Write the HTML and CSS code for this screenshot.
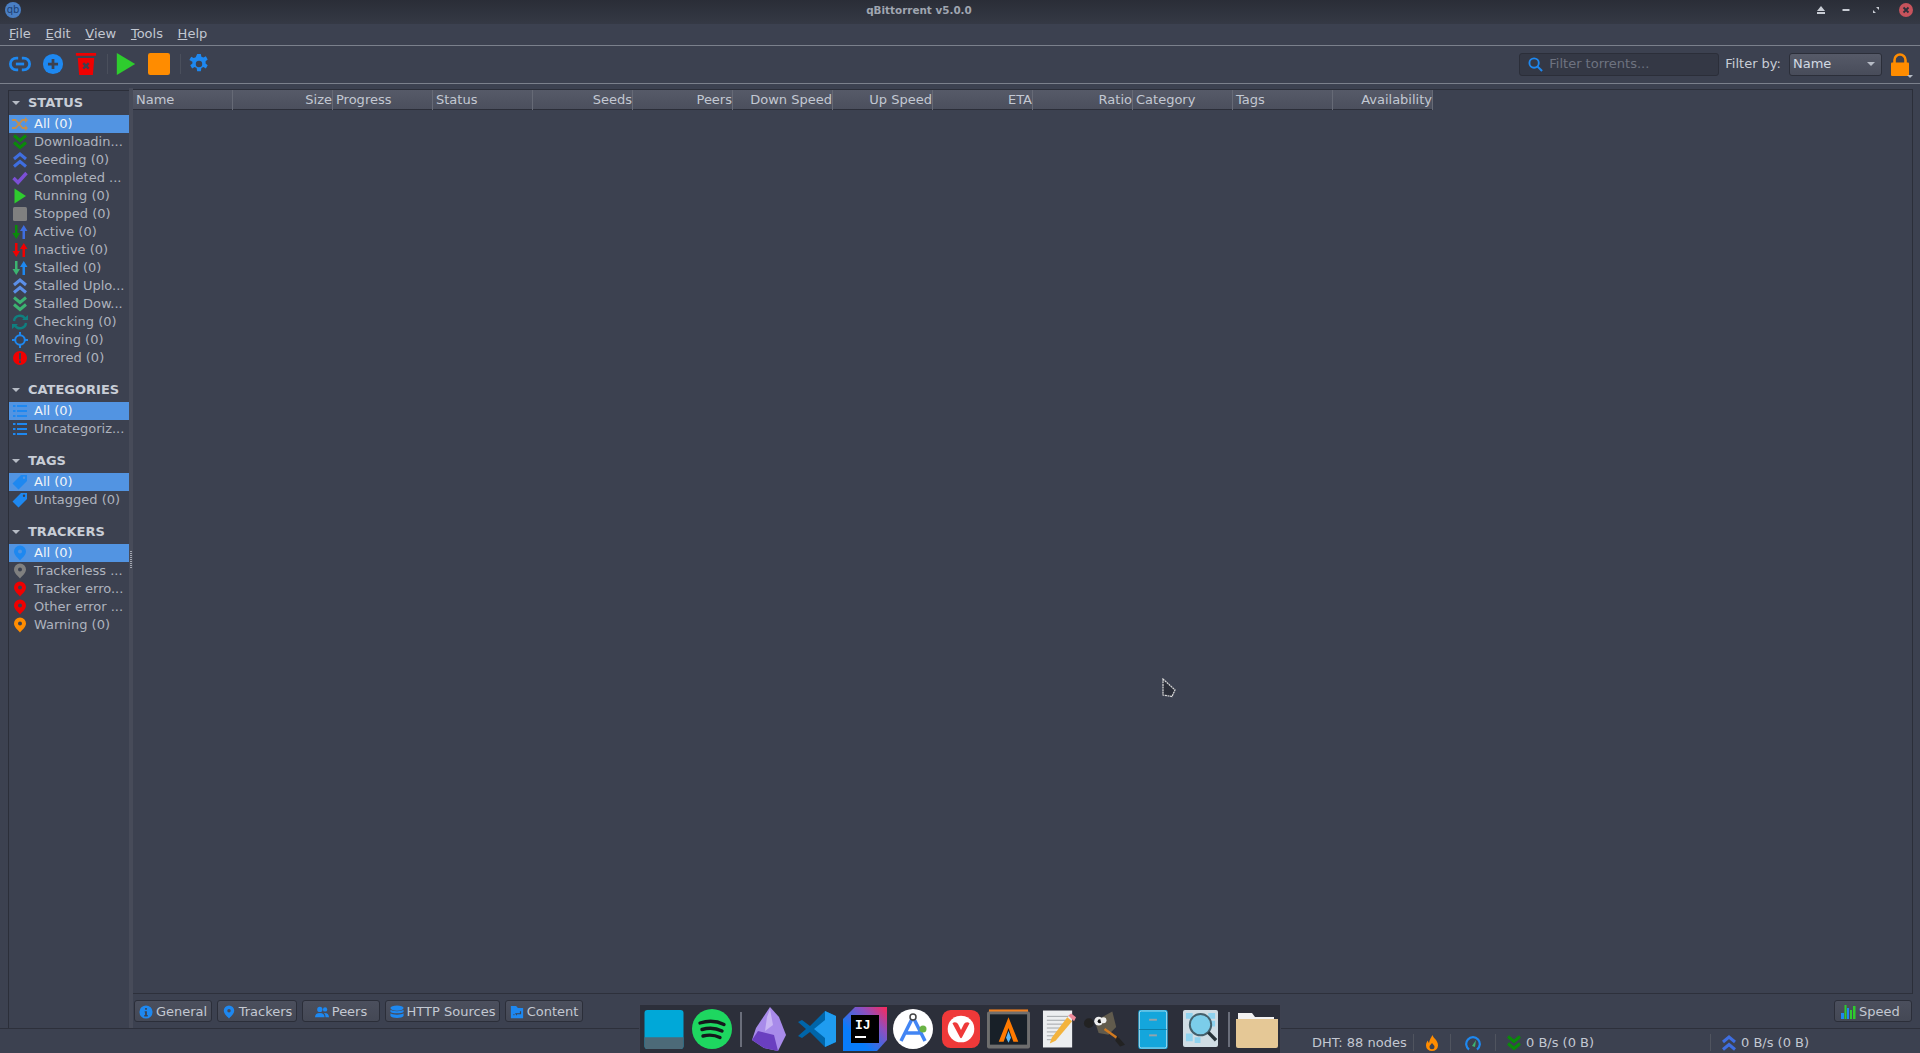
FILE: index.html
```html
<!DOCTYPE html>
<html lang="en">
<head>
<meta charset="utf-8">
<title>qBittorrent v5.0.0</title>
<link rel="stylesheet" href="styles.css">
</head>
<body>
<svg class="defs" width="0" height="0" aria-hidden="true">
  <symbol id="dbl-down" viewBox="0 0 16 16"><path d="M2 1.500l6 5 6-5M2 8.500l6 5 6-5" fill="none" stroke="currentColor" stroke-width="3"/></symbol>
  <symbol id="dbl-up" viewBox="0 0 16 16"><path d="M2 7l6-5 6 5M2 14.500l6-5 6 5" fill="none" stroke="currentColor" stroke-width="3"/></symbol>
  <symbol id="pin" viewBox="0 0 16 16"><path fill-rule="evenodd" fill="currentColor" d="M8 .5a6 6 0 0 0-6 6c0 3.500 4 6.500 6 9 2-2.500 6-5.500 6-9a6 6 0 0 0-6-6zm0 4a2 2 0 1 1 0 4 2 2 0 0 1 0-4z"/></symbol>
  <symbol id="list" viewBox="0 0 16 16"><path fill="currentColor" d="M1 2h2.500v2H1zM5 2h10v2H5zM1 7h2.500v2H1zM5 7h10v2H5zM1 12h2.500v2H1zM5 12h10v2H5z"/></symbol>
  <symbol id="tag" viewBox="0 0 16 16"><path fill-rule="evenodd" fill="currentColor" d="M9 1h6v6l-8.500 8.500L.5 9.500zm3 1.500a1.200 1.200 0 1 0 0 2.400 1.200 1.200 0 0 0 0-2.400z"/></symbol>
</svg>

<div class="titlebar">
  <svg class="app-logo" viewBox="0 0 16 16"><circle cx="8" cy="8" r="8" fill="#4a7fc4"/><text x="8" y="11" text-anchor="middle" class="logo-text">qb</text></svg>
  <span class="title">qBittorrent v5.0.0</span>
  <div class="win-btns">
    <svg class="win-btn win-eject" viewBox="0 0 10 10"><path fill="#c8ccd4" d="M5 1l4 5H1zM1 7h8v2H1z"/></svg>
    <svg class="win-btn win-min" viewBox="0 0 10 10"><path fill="#c8ccd4" d="M1.500 4h7v2h-7z"/></svg>
    <svg class="win-btn win-max" viewBox="0 0 10 10"><path fill="#c8ccd4" d="M5 2h3v3zM2 5v3h3z"/></svg>
    <svg class="win-close" viewBox="0 0 14 14"><circle cx="7" cy="7" r="7" fill="#c7535c"/><path d="M4.500 4.500l5 5m0-5l-5 5" stroke="#2d303b" stroke-width="1.800"/></svg>
  </div>
</div>

<nav class="menubar">
  <span class="menu-item"><u>F</u>ile</span>
  <span class="menu-item"><u>E</u>dit</span>
  <span class="menu-item"><u>V</u>iew</span>
  <span class="menu-item"><u>T</u>ools</span>
  <span class="menu-item"><u>H</u>elp</span>
</nav>

<div class="toolbar">
  <svg class="tool-icon" viewBox="0 0 24 24"><path d="M10 5.500H8a6.500 6.500 0 0 0 0 13h2M14 5.500h2a6.500 6.500 0 0 1 0 13h-2" fill="none" stroke="#1e88f0" stroke-width="3"/><path d="M7.500 12h9" stroke="#1e88f0" stroke-width="3"/></svg>
  <svg class="tool-icon" viewBox="0 0 24 24"><circle cx="12" cy="12" r="11" fill="#1e88f0"/><path d="M12 6.500v11M6.500 12h11" stroke="#3c4150" stroke-width="3"/></svg>
  <svg class="tool-icon" viewBox="0 0 24 24"><path fill="#f00000" d="M1 0h22v3H1zM3 5.500h18l-1.500 18.500h-15z"/><path d="M9 11l6 6m0-6l-6 6" stroke="#3c4150" stroke-width="2.600"/></svg>
  <span class="tool-sep"></span>
  <svg class="tool-icon" viewBox="0 0 24 24"><path fill="#2ecc2e" d="M2 0l20 12L2 24z"/></svg>
  <svg class="tool-icon" viewBox="0 0 24 24"><rect width="24" height="24" rx="2.500" fill="#ff8c00"/></svg>
  <span class="tool-sep"></span>
  <svg class="tool-icon" viewBox="0 0 24 24"><path fill="#1e88f0" fill-rule="evenodd" d="M10 1h4l.6 3 2.200 1 2.700-1.500 2 3.500-2.300 2v2.400l2.300 2-2 3.500-2.700-1.500-2.200 1-.6 3.500h-4l-.6-3.500-2.200-1-2.700 1.500-2-3.500 2.300-2V9.500L1.500 7.500l2-3.500L6.200 5.500l2.200-1zM12 8.500a3.500 3.500 0 1 0 0 7 3.500 3.500 0 0 0 0-7z"/></svg>
  <div class="tool-spacer"></div>
  <div class="search">
    <svg class="search-icon" viewBox="0 0 16 16"><circle cx="6.500" cy="6.500" r="5" fill="none" stroke="#1e88f0" stroke-width="2"/><path d="M10 10l5 5" stroke="#1e88f0" stroke-width="2.200"/></svg>
    <span class="placeholder">Filter torrents...</span>
  </div>
  <span class="filter-label">Filter by:</span>
  <div class="combo"><span>Name</span><span class="caret"></span></div>
  <div class="lock">
    <svg class="lock-icon" viewBox="0 0 18 23"><path fill="none" stroke="#ff8c00" stroke-width="2.600" d="M3.500 11V7a5.500 5.500 0 0 1 11 0v4"/><rect y="9.500" width="18" height="13.500" rx="1" fill="#ff8c00"/></svg>
    <span class="caret caret-small"></span>
  </div>
</div>

<main class="workspace">
  <aside class="sidebar">
    <section class="side-section">
      <h2 class="side-head"><span class="caret"></span>STATUS</h2>
      <div class="row selected"><svg class="row-icon dim" viewBox="0 0 16 16"><path d="M0 4h3.500l7 8H14M0 12h3.500l7-8H14" fill="none" stroke="#ff8c00" stroke-width="1.800"/><path fill="#ff8c00" d="M13 1l3 3-3 3zM13 9l3 3-3 3z"/></svg>All (0)</div>
      <div class="row"><svg class="row-icon c-green"><use href="#dbl-down"/></svg>Downloadin...</div>
      <div class="row"><svg class="row-icon c-indigo"><use href="#dbl-up"/></svg>Seeding (0)</div>
      <div class="row"><svg class="row-icon" viewBox="0 0 16 16"><path d="M1.500 8l4.500 4.500L14.500 3" fill="none" stroke="#7c4fd6" stroke-width="3.400"/></svg>Completed ...</div>
      <div class="row"><svg class="row-icon" viewBox="0 0 16 16"><path fill="#2ecc2e" d="M2.500 .5L14 8 2.500 15.500z"/></svg>Running (0)</div>
      <div class="row"><svg class="row-icon" viewBox="0 0 16 16"><rect x="1" y="1" width="14" height="14" rx="1.500" fill="#808080"/></svg>Stopped (0)</div>
      <div class="row"><svg class="row-icon" viewBox="0 0 16 16"><path fill="#0a8a0a" d="M3 1h2.500v8H8l-3.750 6L.5 9H3z"/><path fill="#3f6ee0" d="M10.500 15h2.500V7h2.500l-3.750-6L8 7h2.500z"/></svg>Active (0)</div>
      <div class="row"><svg class="row-icon" viewBox="0 0 16 16"><path fill="#f00000" d="M3 1h2.500v8H8l-3.750 6L.5 9H3zM10.500 15h2.500V7h2.500l-3.750-6L8 7h2.500z"/></svg>Inactive (0)</div>
      <div class="row"><svg class="row-icon" viewBox="0 0 16 16"><path fill="#3cb371" d="M3 1h2.500v8H8l-3.750 6L.5 9H3z"/><path fill="#1e88f0" d="M10.500 15h2.500V7h2.500l-3.750-6L8 7h2.500z"/></svg>Stalled (0)</div>
      <div class="row"><svg class="row-icon c-cornflower"><use href="#dbl-up"/></svg>Stalled Uplo...</div>
      <div class="row"><svg class="row-icon c-sea"><use href="#dbl-down"/></svg>Stalled Dow...</div>
      <div class="row"><svg class="row-icon" viewBox="0 0 16 16"><path d="M2 7a6 6 0 0 1 11-2.500M14 9a6 6 0 0 1-11 2.500" fill="none" stroke="#0f7f7f" stroke-width="2.400"/><path fill="#0f7f7f" d="M10 6h6V1zM6 10H0v5z"/></svg>Checking (0)</div>
      <div class="row"><svg class="row-icon" viewBox="0 0 16 16"><circle cx="8" cy="8" r="4.800" fill="none" stroke="#1e88f0" stroke-width="2"/><path d="M8 0v3M8 13v3M0 8h3M13 8h3" stroke="#1e88f0" stroke-width="2"/></svg>Moving (0)</div>
      <div class="row"><svg class="row-icon" viewBox="0 0 16 16"><circle cx="8" cy="8" r="7" fill="#f00000"/><path fill="#3c4150" d="M7 3h2v6.500H7zM7 10.500h2V13H7z"/></svg>Errored (0)</div>
    </section>
    <section class="side-section">
      <h2 class="side-head"><span class="caret"></span>CATEGORIES</h2>
      <div class="row selected"><svg class="row-icon c-blue"><use href="#list"/></svg>All (0)</div>
      <div class="row"><svg class="row-icon c-blue"><use href="#list"/></svg>Uncategoriz...</div>
    </section>
    <section class="side-section">
      <h2 class="side-head"><span class="caret"></span>TAGS</h2>
      <div class="row selected"><svg class="row-icon c-blue"><use href="#tag"/></svg>All (0)</div>
      <div class="row"><svg class="row-icon c-blue"><use href="#tag"/></svg>Untagged (0)</div>
    </section>
    <section class="side-section">
      <h2 class="side-head"><span class="caret"></span>TRACKERS</h2>
      <div class="row selected"><svg class="row-icon c-blue"><use href="#pin"/></svg>All (0)</div>
      <div class="row"><svg class="row-icon c-gray"><use href="#pin"/></svg>Trackerless ...</div>
      <div class="row"><svg class="row-icon c-red"><use href="#pin"/></svg>Tracker erro...</div>
      <div class="row"><svg class="row-icon c-red"><use href="#pin"/></svg>Other error ...</div>
      <div class="row"><svg class="row-icon c-orange"><use href="#pin"/></svg>Warning (0)</div>
    </section>
  </aside>

  <div class="splitter"><span class="grip"></span></div>

  <div class="content">
    <div class="table">
      <div class="table-head">
        <div class="th">Name</div>
        <div class="th right">Size</div>
        <div class="th">Progress</div>
        <div class="th">Status</div>
        <div class="th right">Seeds</div>
        <div class="th right">Peers</div>
        <div class="th right">Down Speed</div>
        <div class="th right">Up Speed</div>
        <div class="th right">ETA</div>
        <div class="th right">Ratio</div>
        <div class="th">Category</div>
        <div class="th">Tags</div>
        <div class="th right">Availability</div>
      </div>
    </div>
    <div class="tabs">
      <button class="tab tab-general"><svg class="tab-icon" viewBox="0 0 16 16"><circle cx="8" cy="8" r="7.500" fill="#1e88f0"/><path fill="#3c4150" d="M7 3.500h2v2H7zM6.500 7H9v4.500h1V13H6v-1.500h1V8.500h-.5z"/></svg>General</button>
      <button class="tab tab-trackers"><svg class="tab-icon c-blue"><use href="#pin"/></svg>Trackers</button>
      <button class="tab tab-peers"><svg class="tab-icon" viewBox="0 0 16 16"><g fill="#1e88f0"><circle cx="5.500" cy="5" r="3"/><circle cx="11.500" cy="5" r="2.500"/><path d="M0 14c0-3.500 2-5 5.500-5s5.500 1.500 5.500 5zM12 14c0-2-.5-3.500-1.700-4.800C13.500 8.800 16 10.500 16 14z"/></g></svg>Peers</button>
      <button class="tab tab-http"><svg class="tab-icon" viewBox="0 0 16 16"><g fill="#1e88f0"><ellipse cx="8" cy="3.500" rx="7.500" ry="3"/><path d="M.5 5.500C2 7.500 14 7.500 15.500 5.500V8C14 10 2 10 .5 8zM.5 9.500C2 11.500 14 11.500 15.500 9.500V12.500C14 15.500 2 15.500 .5 12.500z"/></g></svg>HTTP Sources</button>
      <button class="tab tab-content"><svg class="tab-icon" viewBox="0 0 16 16"><path fill="#1e88f0" d="M1 1h6l2 2.500h6V15H1z"/><path d="M12 7v3H6M4 11h1M7 11h1" fill="none" stroke="#3c4150" stroke-width="1.400"/></svg>Content</button>
      <div class="tabs-spacer"></div>
      <button class="tab tab-speed"><svg class="speed-icon" viewBox="0 0 16 16"><path fill="#1e88f0" d="M1 9h3v6H1zM7 4h2v11H7z"/><path fill="#2ecc2e" d="M4.500 1h2v14h-2zM10 6h2v9h-2zM13 2h2.500v13H13z"/></svg>Speed</button>
    </div>
  </div>
</main>

<footer class="statusbar">
  <span class="st st-dht">DHT: 88 nodes</span>
  <span class="st st-flame"><svg class="st-icon" viewBox="0 0 16 16"><path fill-rule="evenodd" fill="#ff8c00" d="M8.500 0c.5 3 5.500 5 5.500 10.500a6 5.500 0 0 1-12 0c0-2.500 1-4 2-5 0 1 .5 2 1 2.500C5.500 5 7 2.500 8.500 0zM8 8c-1 1.500-2.500 2.500-2.500 3.800a2.500 2.500 0 0 0 5 0C10.500 10.500 9 9.500 8 8z"/></svg></span>
  <span class="st st-gauge"><svg class="st-icon" viewBox="0 0 16 16"><path d="M4 14.500a6.800 6.800 0 1 1 8 0" fill="none" stroke="#1e88f0" stroke-width="2.200"/><path d="M7 11l4-6-1 7z" fill="#3cb371"/></svg></span>
  <span class="st st-down"><svg class="st-icon c-green"><use href="#dbl-down"/></svg>0 B/s (0 B)</span>
  <span class="st st-up"><svg class="st-icon c-indigo"><use href="#dbl-up"/></svg>0 B/s (0 B)</span>
</footer>

<div class="dock">
  <svg class="d-app d1" viewBox="0 0 40 40"><rect width="40" height="40" rx="3" fill="#00a8d8"/><path d="M0 28h40v9a3 3 0 0 1-3 3H3a3 3 0 0 1-3-3z" fill="#4c6a78"/></svg>
  <svg class="d-app d2" viewBox="0 0 40 40"><circle cx="20" cy="20" r="20" fill="#1ed760"/><path d="M8 14c8-2.500 17-2 24 1.500M10 20.500c7-2 14-1.500 20 1.500M11 27c6-1.500 12-1 17 1.500" fill="none" stroke="#15181c" stroke-width="3.400" stroke-linecap="round"/></svg>
  <span class="d-sep d-sep1"></span>
  <svg class="d-app d3" viewBox="0 0 34 44"><path fill="#a88bea" d="M18 0l9 10 7 18-8 16-14-3-12-8 4-12z"/><path fill="#6a3fc0" d="M6 24l16 4 4 16-14-3-12-8z"/><path fill="#c9b6f4" d="M18 2l3 16-8 6 2-14z"/></svg>
  <svg class="d-app d4" viewBox="0 0 38 38"><path fill="#0065a9" d="M27 1L12 16 4 10 0 12l8 7-8 7 4 2 8-6 15 15 11-5V6z"/><path fill="#1f9cf0" d="M27 1l11 5v26l-11 5zM27 10L16 19l11 9z"/></svg>
  <svg class="d-app d5" viewBox="0 0 44 44"><defs><linearGradient id="ij" x1="0" y1="1" x2="1" y2="0"><stop offset="0.300" stop-color="#087cfa"/><stop offset="0.700" stop-color="#8d4fc0"/><stop offset="1" stop-color="#fe2857"/></linearGradient></defs><path fill="url(#ij)" d="M12 0h32v33L34 44H0V12z"/><rect x="8" y="8" width="28" height="28" fill="#000"/><text x="12" y="22" class="ij-text">IJ</text><rect x="12" y="29" width="11" height="2" fill="#fff"/></svg>
  <svg class="d-app d6" viewBox="0 0 40 40"><circle cx="20" cy="20" r="20" fill="#fff"/><path d="M20 8L8 32M20 8l12 24M11 24h18" fill="none" stroke="#4285f4" stroke-width="3.500"/><circle cx="20" cy="8" r="3" fill="#fff" stroke="#444" stroke-width="1.500"/><circle cx="30" cy="20" r="3.500" fill="#6ab344"/></svg>
  <svg class="d-app d7" viewBox="0 0 40 40"><rect width="40" height="40" rx="9" fill="#ef3939"/><circle cx="20" cy="20" r="14" fill="#fff"/><path d="M11 14c2-2 5-1 6 1l3 6 3-6c1-2 4-3 6-1l-8 15c-.6 1-1.400 1-2 0z" fill="#ef3939"/></svg>
  <svg class="d-app d8" viewBox="0 0 44 40"><rect x="2" y="0" width="40" height="4" fill="#f08020"/><rect y="2" width="44" height="38" rx="2" fill="#6e6e6e"/><rect x="3" y="5" width="38" height="31" fill="#182028"/><path fill="#ff7a00" d="M22 8l10 25h-5l-5-14-5 14h-5z"/><path fill="#5bb8f5" d="M22 22l2.500 7-2.500 5-2.500-5z"/></svg>
  <svg class="d-app d9" viewBox="0 0 36 40"><rect x="1" y="1" width="30" height="38" fill="#eceef0"/><path d="M5 7h22M5 11h22M5 15h22M5 19h18M5 23h14M5 27h10M5 31h8" stroke="#a0a4a8" stroke-width="1"/><path fill="#f3b33d" d="M26 8l5 4-17 20-6 3 2-6z"/><path fill="#ef8a9a" d="M27 6l3-2 5 4-2 4z"/></svg>
  <svg class="d-app d10" viewBox="0 0 44 40"><path fill="#615b4d" d="M12 12l18-10 4 16-8 8-10-2z"/><circle cx="6" cy="14" r="5" fill="#222"/><circle cx="16" cy="12" r="4.500" fill="#eee"/><circle cx="17" cy="12" r="2" fill="#111"/><circle cx="21" cy="11" r="3" fill="#eee"/><path d="M22 20l14 10" stroke="#d17a20" stroke-width="2.500"/><path d="M35 27l8 9-5 2-5-6z" fill="#222"/></svg>
  <svg class="d-app d11" viewBox="0 0 30 40"><rect width="30" height="40" rx="2" fill="#14a6dc"/><rect x="1" y="1" width="28" height="38" rx="2" fill="none" stroke="#a7dbef"/><path d="M1 20h28" stroke="#0c7da8"/><rect x="11" y="9" width="8" height="2" fill="#93a4ac"/><rect x="11" y="25" width="8" height="2" fill="#93a4ac"/></svg>
  <svg class="d-app d12" viewBox="0 0 36 40"><rect width="36" height="38" rx="2" fill="#d0dde4"/><path fill="#8fd3ef" d="M26 3h7v6h-7zM26 11h7v6h-7zM3 3h7v6H3zM3 24h7v8H3zM12 28h6v6h-6z"/><circle cx="18" cy="15" r="11" fill="#7bcdea" stroke="#44606c" stroke-width="2"/><path d="M26 23l8 8" stroke="#263238" stroke-width="3.500"/></svg>
  <span class="d-sep d-sep2"></span>
  <svg class="d-app d13" viewBox="0 0 42 40"><path fill="#f2f2f2" d="M2 4h14l3 4h19v6H2z"/><path fill="#e5c896" d="M0 10h42v27a2 2 0 0 1-2 2H2a2 2 0 0 1-2-2z"/></svg>
</div>

<svg class="cursor" viewBox="0 0 14 20"><path d="M1 1L13 12l-3 6.500L1 17z" fill="#2b2e39" stroke="#dcdcdc" stroke-width="1.200" stroke-dasharray="2 .6"/></svg>
</body>
</html>
```
FILE: styles.css
```css
* { box-sizing: border-box; }
html, body { margin: 0; height: 100%; }
body {
  width: 1920px;
  height: 1053px;
  overflow: hidden;
  display: flex;
  flex-direction: column;
  background: #3c4150;
  color: #d3dae3;
  font: 13px/18px "DejaVu Sans", sans-serif;
  position: relative;
}
.defs { position: absolute; }
svg { display: block; flex: none; }

.titlebar {
  height: 24px;
  flex: none;
  background: linear-gradient(#2a2d37, #353945);
  display: flex;
  align-items: center;
  position: relative;
  padding: 0 0 4px 5px;
}
.app-logo { width: 16px; height: 16px; }
.logo-text { font: 10px "DejaVu Sans", sans-serif; fill: #1d3f73; }
.title {
  position: absolute;
  left: 0;
  right: 82px;
  top: 0;
  text-align: center;
  font-size: 10.400px;
  font-weight: bold;
  color: #a0a6b1;
  line-height: 20px;
}
.win-btns { margin-left: auto; display: flex; align-items: center; }
.win-btn { width: 10px; height: 10px; }
.win-eject { margin-right: 15px; }
.win-min { margin-right: 20px; }
.win-max { margin-right: 18px; }
.win-close { width: 14px; height: 14px; margin-right: 7px; }

.menubar {
  height: 22px;
  flex: none;
  display: flex;
  padding: 0 0 2px 9px;
  align-items: center;
  gap: 14.700px;
  border-bottom: 1px solid #7b808c;
  color: #c2c7d1;
}
.menu-item { line-height: 18px; }

.toolbar {
  height: 38px;
  flex: none;
  display: flex;
  align-items: center;
  padding: 0 5px 1px 9px;
  border-bottom: 1px solid #7b808c;
}
.tool-icon { width: 22px; height: 22px; margin-right: 11px; }
.tool-sep { width: 1px; height: 20px; background: #4a4f5c; margin: 0 7px 0 -1px; }
.tool-spacer { flex: 1; }
.search {
  width: 200px;
  height: 23px;
  display: flex;
  align-items: center;
  background: #343845;
  border: 1px solid #2b2e39;
  border-radius: 3px;
  padding-left: 8px;
  margin-right: 6px;
}
.search-icon { width: 15px; height: 15px; margin-right: 6px; }
.placeholder { color: #6e7380; }
.filter-label { margin-right: 8px; color: #c8cdd6; }
.combo {
  width: 93px;
  height: 23px;
  display: flex;
  align-items: center;
  justify-content: space-between;
  padding: 0 6px 0 3px;
  border: 1px solid #2b2e39;
  border-radius: 3px;
  background: linear-gradient(#565a68, #484c5a);
  color: #d3dae3;
}
.caret {
  display: inline-block;
  width: 0; height: 0;
  border-left: 4px solid transparent;
  border-right: 4px solid transparent;
  border-top: 4px solid #b6bbc5;
}
.lock { margin-left: 9px; width: 24px; height: 28px; position: relative; }
.lock-icon { width: 18px; height: 23px; margin-top: 3px; }
.caret-small {
  position: absolute;
  right: 2px;
  bottom: 0;
  border-left-width: 3px;
  border-right-width: 3px;
  border-top-width: 3px;
}

.workspace {
  flex: none;
  height: 945px;
  padding: 4px 0 0 8px;
  display: flex;
  border-bottom: 1px solid #2d303b;
}
.sidebar {
  width: 121px;
  flex: none;
  border-left: 1px solid #2b2e39;
  border-top: 1px solid #2b2e39;
  margin-top: 2px;
  overflow: hidden;
}
.side-section { margin-bottom: 11px; }
.side-head {
  margin: 0;
  height: 24px;
  display: flex;
  align-items: center;
  font-size: 13px;
  font-weight: bold;
  color: #c8cdd6;
  padding-left: 3px;
}
.side-head .caret { margin-right: 8px; }
.row {
  height: 18px;
  display: flex;
  align-items: center;
  padding-left: 3px;
  color: #aeb3be;
  white-space: nowrap;
  overflow: hidden;
}
.row.selected { background: #5294e2; color: #eef3f8; }
.row-icon { width: 16px; height: 16px; margin-right: 6px; }
.dim { opacity: 0.65; }
.c-green { color: #0a8a0a; }
.c-indigo { color: #3f6ee0; }
.c-cornflower { color: #5b8fe8; }
.c-sea { color: #3cb371; }
.c-blue { color: #1e88f0; }
.c-gray { color: #808080; }
.c-red { color: #f00000; }
.c-orange { color: #ff8c00; }

.splitter { width: 4px; flex: none; background: #474b59; position: relative; }
.grip {
  position: absolute;
  left: 1px;
  top: 463px;
  width: 2px;
  height: 18px;
  background: repeating-linear-gradient(#a2a6b0 0 1px, transparent 1px 2px);
}
.content { flex: 1; min-width: 0; display: flex; flex-direction: column; margin-top: 1px; padding-right: 7px; }
.table {
  flex: none;
  height: 905px;
  border-top: 1px solid #2b2e39;
  border-right: 1px solid #2b2e39;
  border-bottom: 1px solid #2d303b;
}
.table-head {
  display: grid;
  grid-template-columns: repeat(13, 100px);
  width: 1300px;
  height: 20px;
  border-bottom: 1px solid #2b2e39;
  background: linear-gradient(#565a68, #4b4f5d);
}
.th {
  padding: 0 0 0 3px;
  line-height: 20px;
  border-right: 1px solid #666a76;
  color: #c3c8d2;
  white-space: nowrap;
}
.th.right { text-align: right; }
.tabs { display: flex; padding: 6px 1px 0 1px; gap: 5px; }
.tab {
  height: 22px;
  padding: 1px 0 0;
  font: inherit;
  line-height: 18px;
  color: #c3c8d2;
  background: linear-gradient(#4b4f5d, #444855);
  border: 1px solid #2b2e39;
  border-radius: 3px;
  display: flex;
  align-items: center;
  justify-content: center;
  gap: 3px;
}
.tab-icon { width: 14px; height: 14px; }
.speed-icon { width: 16px; height: 16px; }
.tab-general { width: 78px; }
.tab-trackers { width: 80px; }
.tab-peers { width: 78px; }
.tab-http { width: 115px; }
.tab-content { width: 78px; }
.tab-speed { width: 78px; padding-right: 6px; }
.tabs-spacer { flex: 1; }

.statusbar {
  flex: 1;
  display: flex;
  align-items: center;
  padding: 3px 0 0 1312px;
  color: #c3c8d2;
}
.st { display: flex; align-items: center; height: 17px; }
.st-dht { width: 102px; border-right: 1px solid #50545f; }
.st-flame { width: 37px; justify-content: center; border-right: 1px solid #50545f; }
.st-gauge { width: 45px; justify-content: center; border-right: 1px solid #50545f; }
.st-down { width: 215px; padding-left: 10px; gap: 4px; border-right: 1px solid #50545f; }
.st-up { padding-left: 10px; gap: 4px; }
.st-icon { width: 16px; height: 16px; }

.dock {
  position: absolute;
  left: 639px;
  top: 1004px;
  width: 642px;
  height: 49px;
  background: #2c2f3a;
  border: 1px solid #3d4150;
  border-bottom: none;
  display: flex;
  align-items: center;
  padding-left: 4px;
}
.d-app { flex: none; }
.d-sep { flex: none; width: 2px; height: 35px; background: #6a6e7a; }
.d1 { width: 40px; height: 39px; }
.d2 { width: 40px; height: 40px; margin-left: 8px; }
.d-sep1 { margin-left: 8px; }
.d3 { width: 34px; height: 44px; margin-left: 10px; }
.d4 { width: 38px; height: 38px; margin-left: 12px; }
.d5 { width: 44px; height: 44px; margin-left: 7px; }
.d6 { width: 40px; height: 40px; margin-left: 6px; }
.d7 { width: 38px; height: 38px; margin-left: 9px; }
.d8 { width: 43px; height: 40px; margin-left: 7px; }
.d9 { width: 35px; height: 40px; margin-left: 12px; }
.d10 { width: 43px; height: 40px; margin-left: 6px; }
.d11 { width: 30px; height: 39px; margin-left: 12px; }
.d12 { width: 35px; height: 39px; margin-left: 15px; }
.d-sep2 { margin-left: 10px; }
.d13 { width: 42px; height: 40px; margin-left: 6px; }
.ij-text { font: bold 13px "Liberation Mono", monospace; fill: #fff; }

.cursor { position: absolute; left: 1162px; top: 678px; width: 14px; height: 20px; }
```
